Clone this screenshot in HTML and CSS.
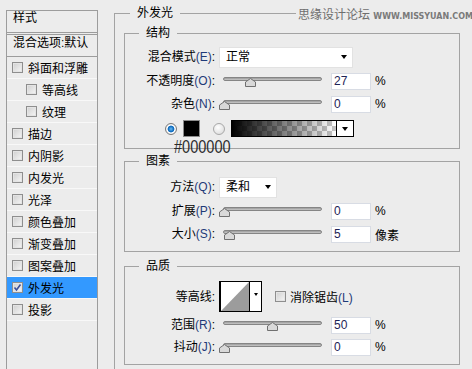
FILE: index.html
```html
<!DOCTYPE html>
<html lang="zh-CN">
<head>
    <meta charset="UTF-8">
    <meta name="viewport" content="width=device-width, initial-scale=1.0">
    <title>图层样式 - 外发光</title>
    <link rel="stylesheet" href="styles.css">
</head>
<body>

<div class="dialog">
    <div class="styles-list">
        <div class="list-head">样式</div>
        <div class="list-blend">混合选项:默认</div>
        <div class="list-item"><span class="check"></span>斜面和浮雕</div>
        <div class="list-item sub"><span class="check"></span>等高线</div>
        <div class="list-item sub"><span class="check"></span>纹理</div>
        <div class="list-item"><span class="check"></span>描边</div>
        <div class="list-item"><span class="check"></span>内阴影</div>
        <div class="list-item"><span class="check"></span>内发光</div>
        <div class="list-item"><span class="check"></span>光泽</div>
        <div class="list-item"><span class="check"></span>颜色叠加</div>
        <div class="list-item"><span class="check"></span>渐变叠加</div>
        <div class="list-item"><span class="check"></span>图案叠加</div>
        <div class="list-item active">
            <span class="check">
                <svg width="9" height="9" viewBox="0 0 9 9"><path d="M1.5 4.5 L3.5 7 L7.5 1.5" fill="none" stroke="#3b4f9c" stroke-width="1.6"/></svg>
            </span>外发光
        </div>
        <div class="list-item"><span class="check"></span>投影</div>
    </div>

    <div class="settings">
        <fieldset class="group outer">
            <legend>外发光</legend>

            <fieldset class="group structure">
                <legend>结构</legend>
                <div class="row r24">
                    <label class="label">混合模式<span class="key">(E)</span>:</label>
                    <div class="select wide">正常<span class="caret"></span></div>
                </div>
                <div class="row r24">
                    <label class="label">不透明度<span class="key">(O)</span>:</label>
                    <div class="slider">
                        <div class="track"></div>
                        <svg class="thumb" style="left: 26px" width="11" height="9" viewBox="0 0 11 9"><path d="M5.5 0.5 L10.5 4 V8.5 H0.5 V4 Z" fill="#d9d9d9" stroke="#707070"/></svg>
                    </div>
                    <div class="num">27</div>
                    <span class="unit">%</span>
                </div>
                <div class="row r22">
                    <label class="label">杂色<span class="key">(N)</span>:</label>
                    <div class="slider">
                        <div class="track"></div>
                        <svg class="thumb" style="left: 0px" width="11" height="9" viewBox="0 0 11 9"><path d="M5.5 0.5 L10.5 4 V8.5 H0.5 V4 Z" fill="#d9d9d9" stroke="#707070"/></svg>
                    </div>
                    <div class="num">0</div>
                    <span class="unit">%</span>
                </div>
                <div class="row color-row">
                    <span class="radio on"></span>
                    <span class="swatch"></span>
                    <span class="radio off"></span>
                    <div class="grad-picker">
                        <div class="grad"></div>
                        <div class="grad-arrow"><span class="caret"></span></div>
                    </div>
                </div>
                <div class="hex">#000000</div>
            </fieldset>

            <fieldset class="group elements">
                <legend>图素</legend>
                <div class="row r24">
                    <label class="label">方法<span class="key">(Q)</span>:</label>
                    <div class="select short">柔和<span class="caret"></span></div>
                </div>
                <div class="row r24">
                    <label class="label">扩展<span class="key">(P)</span>:</label>
                    <div class="slider">
                        <div class="track"></div>
                        <svg class="thumb" style="left: 0px" width="11" height="9" viewBox="0 0 11 9"><path d="M5.5 0.5 L10.5 4 V8.5 H0.5 V4 Z" fill="#d9d9d9" stroke="#707070"/></svg>
                    </div>
                    <div class="num">0</div>
                    <span class="unit">%</span>
                </div>
                <div class="row r22">
                    <label class="label">大小<span class="key">(S)</span>:</label>
                    <div class="slider">
                        <div class="track"></div>
                        <svg class="thumb" style="left: 5px" width="11" height="9" viewBox="0 0 11 9"><path d="M5.5 0.5 L10.5 4 V8.5 H0.5 V4 Z" fill="#d9d9d9" stroke="#707070"/></svg>
                    </div>
                    <div class="num">5</div>
                    <span class="unit">像素</span>
                </div>
            </fieldset>

            <fieldset class="group quality">
                <legend>品质</legend>
                <div class="row r35">
                    <label class="label">等高线:</label>
                    <div class="contour">
                        <svg class="contour-preview" width="28" height="29" viewBox="0 0 28 29"><rect width="28" height="29" fill="#fff"/><polygon points="0,29 28,0 28,29" fill="#9c9c9c"/></svg>
                        <div class="contour-arrow"><span class="caret small"></span></div>
                    </div>
                    <span class="check aa"></span>
                    <span class="aa-text">消除锯齿<span class="key">(L)</span></span>
                </div>
                <div class="row r22">
                    <label class="label">范围<span class="key">(R)</span>:</label>
                    <div class="slider">
                        <div class="track"></div>
                        <svg class="thumb" style="left: 48px" width="11" height="9" viewBox="0 0 11 9"><path d="M5.5 0.5 L10.5 4 V8.5 H0.5 V4 Z" fill="#d9d9d9" stroke="#707070"/></svg>
                    </div>
                    <div class="num">50</div>
                    <span class="unit">%</span>
                </div>
                <div class="row r22">
                    <label class="label">抖动<span class="key">(J)</span>:</label>
                    <div class="slider">
                        <div class="track"></div>
                        <svg class="thumb" style="left: 0px" width="11" height="9" viewBox="0 0 11 9"><path d="M5.5 0.5 L10.5 4 V8.5 H0.5 V4 Z" fill="#d9d9d9" stroke="#707070"/></svg>
                    </div>
                    <div class="num">0</div>
                    <span class="unit">%</span>
                </div>
            </fieldset>
        </fieldset>
    </div>
</div>

<div class="watermark">思缘设计论坛 <span class="site">WWW.MISSYUAN.COM</span></div>

</body>
</html>
```

FILE: styles.css
```css
body {
    margin: 0;
    background: #ececec;
    overflow: hidden;
    font-family: "Liberation Sans", "Noto Sans CJK SC", sans-serif;
    font-size: 12px;
    color: #000;
}
.dialog {
    display: flex;
    align-items: flex-start;
    padding-left: 6px;
    width: 480px;
}

/* left list of styles */
.styles-list {
    width: 90px;
    height: 370px;
    margin-top: 10px;
    border: 1px solid #9c9c9c;
    border-bottom: none;
    flex: none;
}
.list-head {
    height: 21px;
    line-height: 14px;
    padding-left: 6px;
    border-bottom: 3px double #9c9c9c;
}
.list-blend {
    height: 21px;
    line-height: 17px;
    padding-left: 6px;
    border-bottom: 1px solid #9c9c9c;
    white-space: nowrap;
}
.list-item {
    height: 21px;
    display: flex;
    align-items: center;
    padding-left: 5px;
    border-bottom: 1px solid #f8f8f8;
    white-space: nowrap;
}
.list-item.sub {
    padding-left: 19px;
}
.list-item.active {
    background: #3399ff;
}
.check {
    width: 9px;
    height: 9px;
    border: 1px solid #8e8e8e;
    background: linear-gradient(135deg, #cfcfcf, #f6f6f6);
    box-shadow: inset 0 0 0 1px #e4e4e4;
    margin-right: 5px;
    flex: none;
    display: flex;
}
.check svg {
    display: block;
}

/* right side */
.settings {
    margin-left: 16px;
    margin-top: 5px;
}
.group {
    margin: 0;
    border: 1px solid #a3a3a3;
    min-width: 0;
    box-sizing: border-box;
    width: 336px;
    padding: 4px 0 6px 0;
}
.group legend {
    padding: 0 7px;
    margin-left: 14px;
    line-height: 16px;
    font-size: 12px;
}
.outer {
    width: 380px;
    height: 380px;
    padding: 4px 0 0 9px;
    border-bottom: none;
}
.outer > legend {
    margin-left: 6px;
}
.structure {
    padding-bottom: 0;
}
.elements {
    margin-top: 4px;
    padding-top: 6px;
}
.quality {
    margin-top: 6px;
    padding-top: 5px;
}

.row {
    display: flex;
    align-items: center;
    height: 24px;
}
.r22 {
    height: 22px;
}
.r35 {
    height: 35px;
}
.label {
    width: 90px;
    margin-right: 4px;
    text-align: right;
    line-height: 16px;
    flex: none;
    white-space: nowrap;
}
.key {
    color: #1f3a78;
}
.select {
    height: 21px;
    box-sizing: border-box;
    background: #fff;
    border: 1px solid #e2e2e2;
    display: flex;
    align-items: center;
    padding-left: 6px;
    line-height: 16px;
}
.select.wide {
    width: 134px;
}
.select.short {
    width: 58px;
}
.caret {
    margin-left: auto;
    margin-right: 5px;
    width: 0;
    height: 0;
    border-left: 3.5px solid transparent;
    border-right: 3.5px solid transparent;
    border-top: 4px solid #000;
}
.caret.small {
    margin: 0;
    border-left-width: 2.5px;
    border-right-width: 2.5px;
    border-top-width: 3px;
}

.slider {
    position: relative;
    width: 112px;
    height: 18px;
    flex: none;
}
.track {
    margin: 5px 0 0 4px;
    width: 99px;
    height: 4px;
    box-sizing: border-box;
    border-radius: 2px;
    border: 1px solid #858585;
    background: linear-gradient(#9a9a9a, #c9c9c9);
}
.thumb {
    position: absolute;
    top: 6px;
}
.num {
    width: 40px;
    height: 17px;
    box-sizing: border-box;
    border: 1px solid #d8dce4;
    background: #fff;
    padding-left: 2px;
    line-height: 15px;
    color: #1e2456;
    flex: none;
}
.unit {
    margin-left: 4px;
}

.color-row {
    height: 27px;
    padding-left: 40px;
}
.radio {
    width: 12px;
    height: 12px;
    box-sizing: border-box;
    border-radius: 50%;
    flex: none;
}
.radio.on {
    border: 1px solid #7a7a7a;
    background: radial-gradient(circle, #6bbcf2 0, #1470c2 2.5px, #1470c2 3px, #fff 3.8px, #dedede 6px);
}
.radio.off {
    margin-left: 13px;
    border: 1px solid #a8a8a8;
    background: radial-gradient(circle at 40% 35%, #fff, #d6d6d6);
}
.swatch {
    width: 17px;
    height: 17px;
    box-sizing: border-box;
    border: 1px solid #8c8c8c;
    background: #000;
    margin-left: 6px;
    flex: none;
}
.grad-picker {
    display: flex;
    height: 17px;
    box-sizing: border-box;
    border: 1px solid #000;
    margin-left: 6px;
}
.grad {
    width: 104px;
    background:
        linear-gradient(to right, #000, rgba(0, 0, 0, 0)),
        conic-gradient(#c4c4c4 25%, #fff 0 50%, #c4c4c4 0 75%, #fff 0) 0 0 / 10px 10px;
}
.grad-arrow {
    width: 16px;
    border-left: 1px solid #000;
    background: #fff;
    display: flex;
    align-items: center;
    justify-content: center;
}
.grad-arrow .caret {
    margin: 0;
}
.hex {
    margin-left: 49px;
    height: 10px;
    line-height: 10px;
    margin-bottom: -4px;
    font-family: "Liberation Sans", sans-serif;
    font-size: 17.5px;
    color: #2b2b2b;
    transform: scaleX(0.83);
    transform-origin: left center;
}

.contour {
    display: flex;
    width: 43px;
    height: 31px;
    box-sizing: border-box;
    border: 1px solid #000;
    border-left-width: 2px;
    flex: none;
}
.contour-preview {
    display: block;
}
.contour-arrow {
    flex: 1;
    border-left: 1px solid #000;
    background: #fff;
    display: flex;
    justify-content: center;
    padding-top: 11px;
}
.check.aa {
    margin-left: 13px;
    margin-right: 4px;
}

/* site watermark over the top-right corner */
.watermark {
    position: absolute;
    top: 6px;
    left: 296px;
    padding: 0 2px;
    background: #ececec;
    color: #6e6e6e;
    font-size: 12px;
    line-height: 18px;
    white-space: nowrap;
}
.site {
    font-family: "DejaVu Sans", sans-serif;
    font-weight: bold;
    font-size: 8px;
    color: #7a7a7a;
}
```
